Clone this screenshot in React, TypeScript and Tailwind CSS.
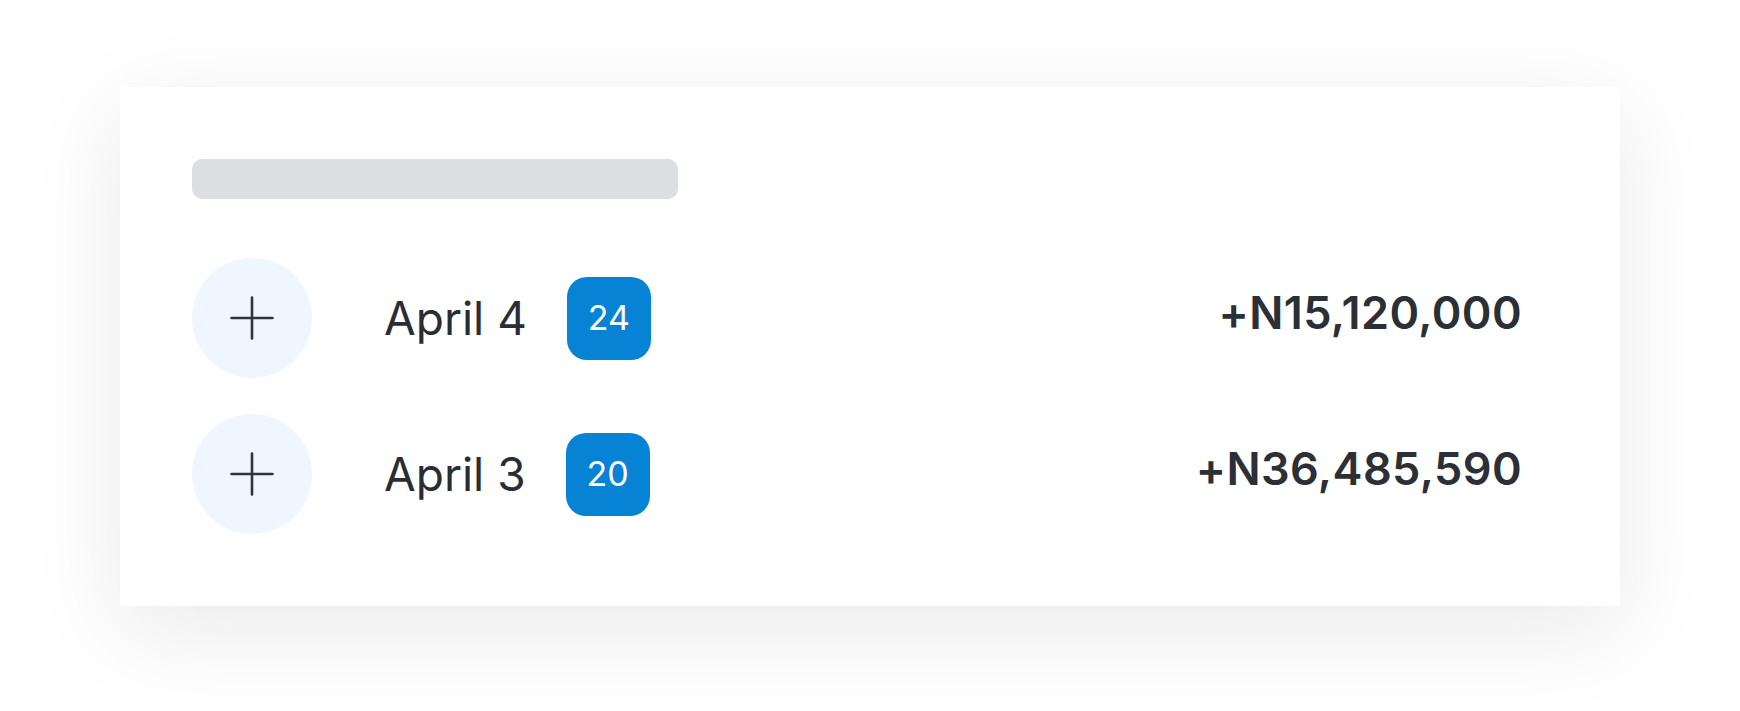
const rows = [
  { date: "April 4", count: 24, amount: "+N15,120,000" },
  { date: "April 3", count: 20, amount: "+N36,485,590" },
];

function PlusIcon() {
  return (
    <svg width="44" height="44" viewBox="0 0 44 44" fill="none">
      <path d="M22 1.5v41M1.5 22h41" stroke="#2d3440" strokeWidth="2.6" strokeLinecap="round" />
    </svg>
  );
}

export default function App() {
  return (
    <div className="min-h-[711px] bg-white px-[120px] pt-[87px] pb-[105px]" style={{ fontFamily: "Inter, 'Open Sans', sans-serif" }}>
      <div className="bg-white shadow-[0_24px_90px_rgba(17,24,39,0.09)] pl-[72px] pr-[98px] pt-[72px] pb-[72px]">
        <div className="w-[486px] h-[40px] rounded-[10px] bg-[#dedfe3] mb-[59px]" />
        <div className="flex flex-col gap-[36px]">
          {rows.map((row) => (
            <div key={row.date} className="flex items-center">
              <div className="w-[120px] h-[120px] rounded-full bg-[#eff6ff] flex items-center justify-center shrink-0">
                <PlusIcon />
              </div>
              <span className="ml-[72px] text-[46px] leading-none text-[#2a2d33]">{row.date}</span>
              <span className="ml-[40px] w-[84px] h-[83px] rounded-[20px] bg-[#0783d5] text-white text-[34px] leading-none flex items-center justify-center">
                {row.count}
              </span>
              <span className="ml-auto mb-[12px] text-[45px] leading-none font-semibold text-[#2b2f36] tracking-[0.4px]">{row.amount}</span>
            </div>
          ))}
        </div>
      </div>
    </div>
  );
}
